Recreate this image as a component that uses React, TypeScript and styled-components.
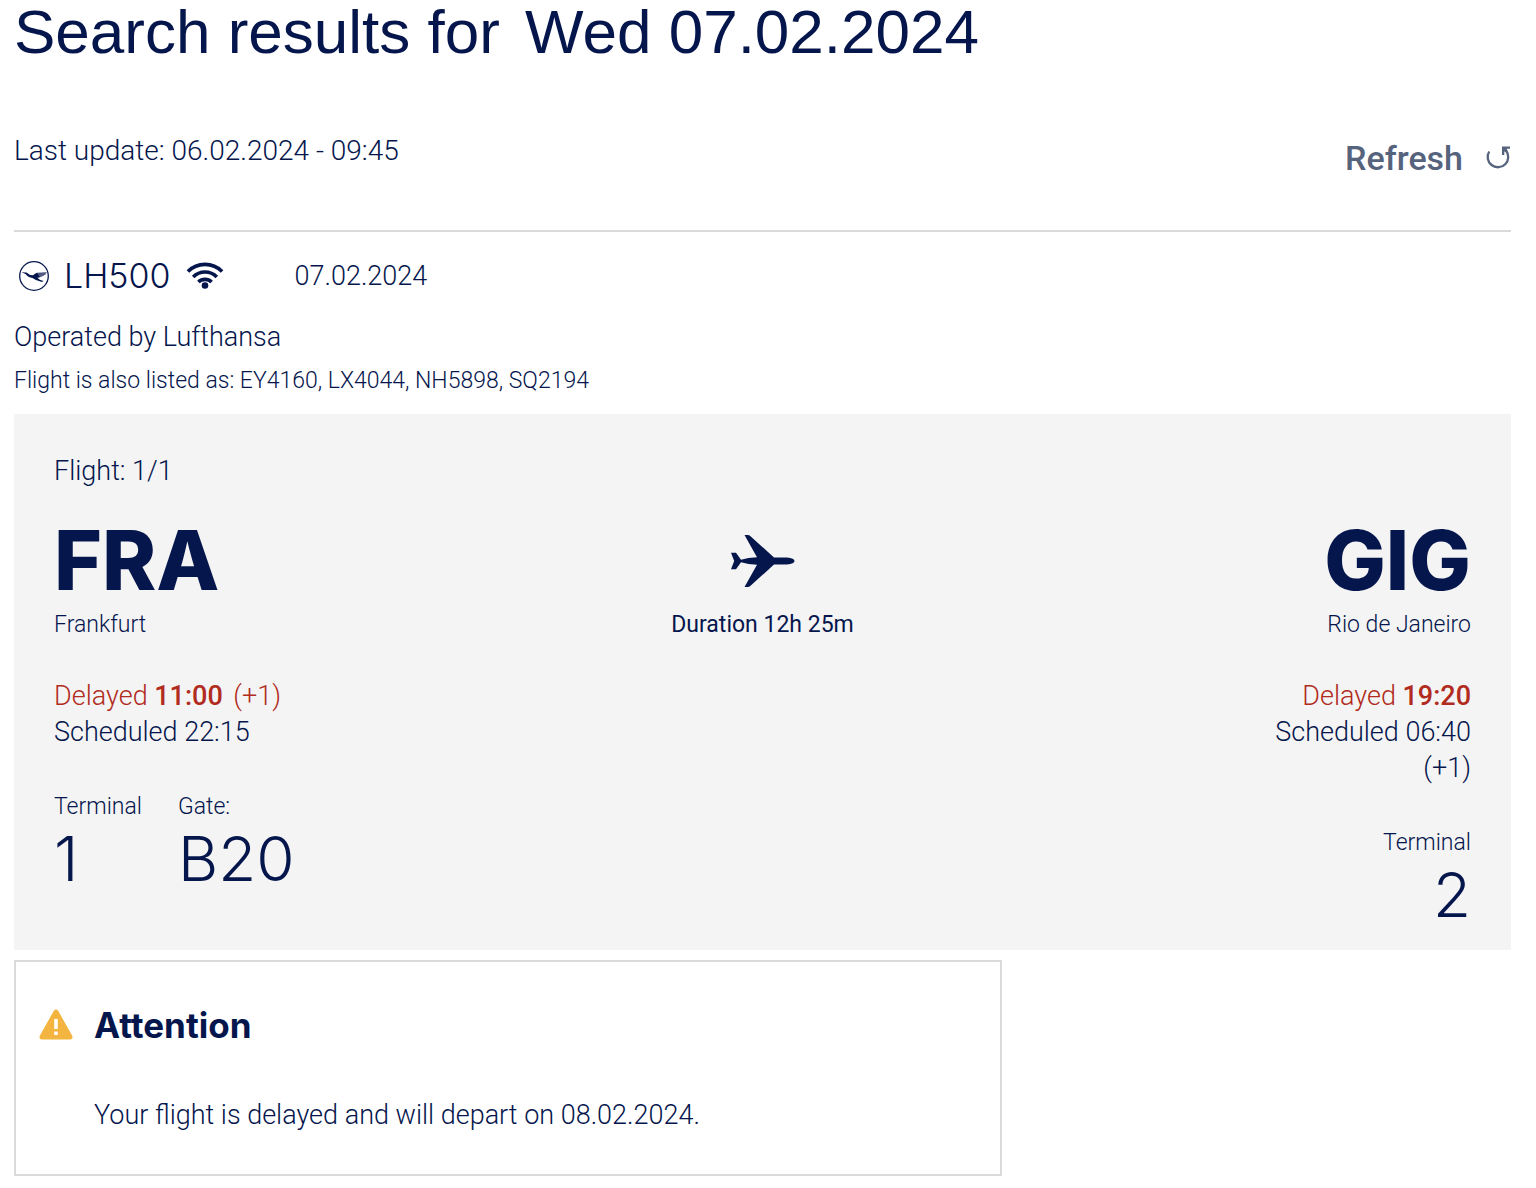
import React from 'react';
import styled, { createGlobalStyle, css } from 'styled-components';

const navy = '#05164d';
const red = '#b12b20';
const textFont = 'Roboto, "Liberation Sans", sans-serif';
const displayFont = 'Inter, "Liberation Sans", sans-serif';

const GlobalStyle = createGlobalStyle`
  * { box-sizing: border-box; }
  body {
    margin: 0;
    background: #fff;
    color: ${navy};
    font-family: ${textFont};
    font-size: 27px;
    font-weight: 300;
    line-height: 36px;
  }
  h1, h2, p, dl, dt, dd { margin: 0; font-weight: inherit; }
`;

const Page = styled.main`
  padding: 0 25px 12px 14px;
`;

const Title = styled.h1`
  margin-bottom: 69px;
  font: 400 62px/64px "Liberation Sans", sans-serif;
`;

const SearchDate = styled.span`
  margin-left: 8px;
`;

const UpdateBar = styled.div`
  display: flex;
  justify-content: space-between;
  align-items: flex-start;
  padding-bottom: 47px;
  border-bottom: 2px solid #dadada;
`;

const Stamp = styled.p`
  font-size: 28px;
`;

const RefreshButton = styled.button`
  display: flex;
  align-items: center;
  gap: 22px;
  height: 50px;
  padding: 0;
  border: 0;
  background: none;
  color: #55637c;
  font: 500 34px/44px ${textFont};
  cursor: pointer;
`;

const FlightLine = styled.div`
  display: flex;
  align-items: center;
  height: 87px;
`;

const FlightNumber = styled.h2`
  margin: 0 15px 0 10px;
  font: 300 34px/44px ${displayFont};
`;

const FlightDate = styled.p`
  margin-left: 71px;
`;

const Codeshares = styled.p`
  margin: 8px 0 15px;
  font-size: 23px;
`;

const Panel = styled.section`
  padding: 39px 40px 22px;
  background: #f4f4f4;
`;

const Legs = styled.div`
  display: grid;
  grid-template-columns: 1fr auto 1fr;
  margin-top: 28px;
`;

const Airport = styled.div<{ $end?: boolean }>`
  display: flex;
  flex-direction: column;
  ${({ $end }) =>
    $end &&
    css`
      align-items: flex-end;
      text-align: right;
    `}
`;

const Code = styled.div`
  font: 800 82px/88px ${displayFont};
`;

const City = styled.div`
  font-size: 23px;
  line-height: 40px;
`;

const Times = styled.div`
  max-width: 236px;
  margin: 33px 0 39px;
`;

const Delay = styled.p`
  color: ${red};

  strong { font-weight: 500; }
`;

const ExtraDay = styled.span`
  margin-left: 4px;
`;

const Facts = styled.dl`
  display: flex;
  gap: 36px;
`;

const Label = styled.dt`
  font-size: 23px;
`;

const Value = styled.dd`
  font: 300 62px/67px ${displayFont};
`;

const Route = styled.div`
  display: flex;
  flex-direction: column;
  align-items: center;
`;

const PlaneSlot = styled.div`
  display: flex;
  align-items: center;
  height: 88px;
`;

const Duration = styled.p`
  font-size: 23px;
  font-weight: 400;
  line-height: 40px;
`;

const Notice = styled.section`
  display: grid;
  grid-template-columns: 34px 1fr;
  align-items: center;
  gap: 51px 21px;
  width: 66%;
  margin-top: 10px;
  padding: 42px 23px 41px;
  border: 2px solid #dadada;
`;

const NoticeTitle = styled.h2`
  font: 700 35px/42px ${displayFont};
`;

const NoticeText = styled.p`
  grid-column: 2;
`;

const RefreshIcon = () => (
  <svg width="26" height="26" viewBox="0 0 26 26" fill="none" aria-hidden="true">
    <path d="M4.200 6.500A10.300 10.300 0 1 0 21 5.500" stroke="currentColor" strokeWidth="2.300" />
    <path d="M17 1.500H25V3.800H21.800L22.500 6L20.500 7.200L19.300 6.200V10H17Z" fill="currentColor" />
  </svg>
);

const CraneLogo = () => (
  <svg width="40" height="32" viewBox="0 0 40 32" aria-hidden="true">
    <circle cx="20" cy="16" r="14.300" fill="none" stroke={navy} strokeWidth="1.300" />
    <path
      fill={navy}
      d="M7.500 12.300L12.500 12.600Q15 15.300 19 15.300Q21 13.400 23 12.700L26 17.300L23.500 17.800Q25 20 29.500 21L28 22Q22 20.900 18.500 18Q14 17.500 11.500 14Z"
    />
    <path fill={navy} opacity="0.700" d="M23 12.700Q28 12.200 33 12.300L31.500 14.200L29.500 15.800L26 17.300L21.500 15.500Z" />
  </svg>
);

const WifiIcon = () => (
  <svg width="38" height="30" viewBox="0 0 38 30" fill="none" stroke={navy} strokeWidth="3.600" aria-label="Wi-Fi on board" role="img">
    <path d="M1.900 10.500A24 24 0 0 1 36.100 10.500" />
    <path d="M7.200 15.900A16.500 16.500 0 0 1 30.800 15.900" />
    <path d="M12.400 21A9.500 9.500 0 0 1 25.600 21" />
    <circle cx="19" cy="24.500" r="3.300" fill={navy} stroke="none" />
  </svg>
);

const PlaneIcon = () => (
  <svg width="66" height="54" viewBox="0 0 66 54" fill={navy} aria-hidden="true">
    <path d="M14.500 1H17.500Q19.500 1 20.500 2.200L44 23.500H57Q64.500 24.300 64.500 27Q64.500 29.700 57 30.500H44L20.500 51.800Q19.500 53 17.500 53H14.500L27 30.700Q18 30.500 11 28.300L6 35.300H1L4.200 27L1 18.700H6L11 25.700Q18 23.500 27 23.300Z" />
  </svg>
);

const WarningIcon = () => (
  <svg width="34" height="32" viewBox="0 0 34 32" aria-hidden="true">
    <path d="M17 3L31 28H3Z" fill="#f4b540" stroke="#f4b540" strokeWidth="5" strokeLinejoin="round" />
    <path d="M15.200 10H18.800V20H15.200ZM15.200 22.500H18.800V26H15.200Z" fill="#fff" />
  </svg>
);

export default function App() {
  return (
    <>
      <GlobalStyle />
      <Page>
        <Title>
          Search results for <SearchDate>Wed 07.02.2024</SearchDate>
        </Title>
        <UpdateBar>
          <Stamp>Last update: 06.02.2024 - 09:45</Stamp>
          <RefreshButton type="button">
            Refresh
            <RefreshIcon />
          </RefreshButton>
        </UpdateBar>

        <FlightLine>
          <CraneLogo />
          <FlightNumber>LH500</FlightNumber>
          <WifiIcon />
          <FlightDate>07.02.2024</FlightDate>
        </FlightLine>
        <p>Operated by Lufthansa</p>
        <Codeshares>Flight is also listed as: EY4160, LX4044, NH5898, SQ2194</Codeshares>

        <Panel>
          <p>Flight: 1/1</p>
          <Legs>
            <Airport>
              <Code>FRA</Code>
              <City>Frankfurt</City>
              <Times>
                <Delay>
                  Delayed <strong>11:00</strong> <ExtraDay>(+1)</ExtraDay>
                </Delay>
                <p>Scheduled 22:15</p>
              </Times>
              <Facts>
                <div>
                  <Label>Terminal</Label>
                  <Value>1</Value>
                </div>
                <div>
                  <Label>Gate:</Label>
                  <Value>B20</Value>
                </div>
              </Facts>
            </Airport>
            <Route>
              <PlaneSlot>
                <PlaneIcon />
              </PlaneSlot>
              <Duration>Duration 12h 25m</Duration>
            </Route>
            <Airport $end>
              <Code>GIG</Code>
              <City>Rio de Janeiro</City>
              <Times>
                <Delay>
                  Delayed <strong>19:20</strong>
                </Delay>
                <p>Scheduled 06:40 (+1)</p>
              </Times>
              <Facts>
                <div>
                  <Label>Terminal</Label>
                  <Value>2</Value>
                </div>
              </Facts>
            </Airport>
          </Legs>
        </Panel>

        <Notice>
          <WarningIcon />
          <NoticeTitle>Attention</NoticeTitle>
          <NoticeText>Your flight is delayed and will depart on 08.02.2024.</NoticeText>
        </Notice>
      </Page>
    </>
  );
}
